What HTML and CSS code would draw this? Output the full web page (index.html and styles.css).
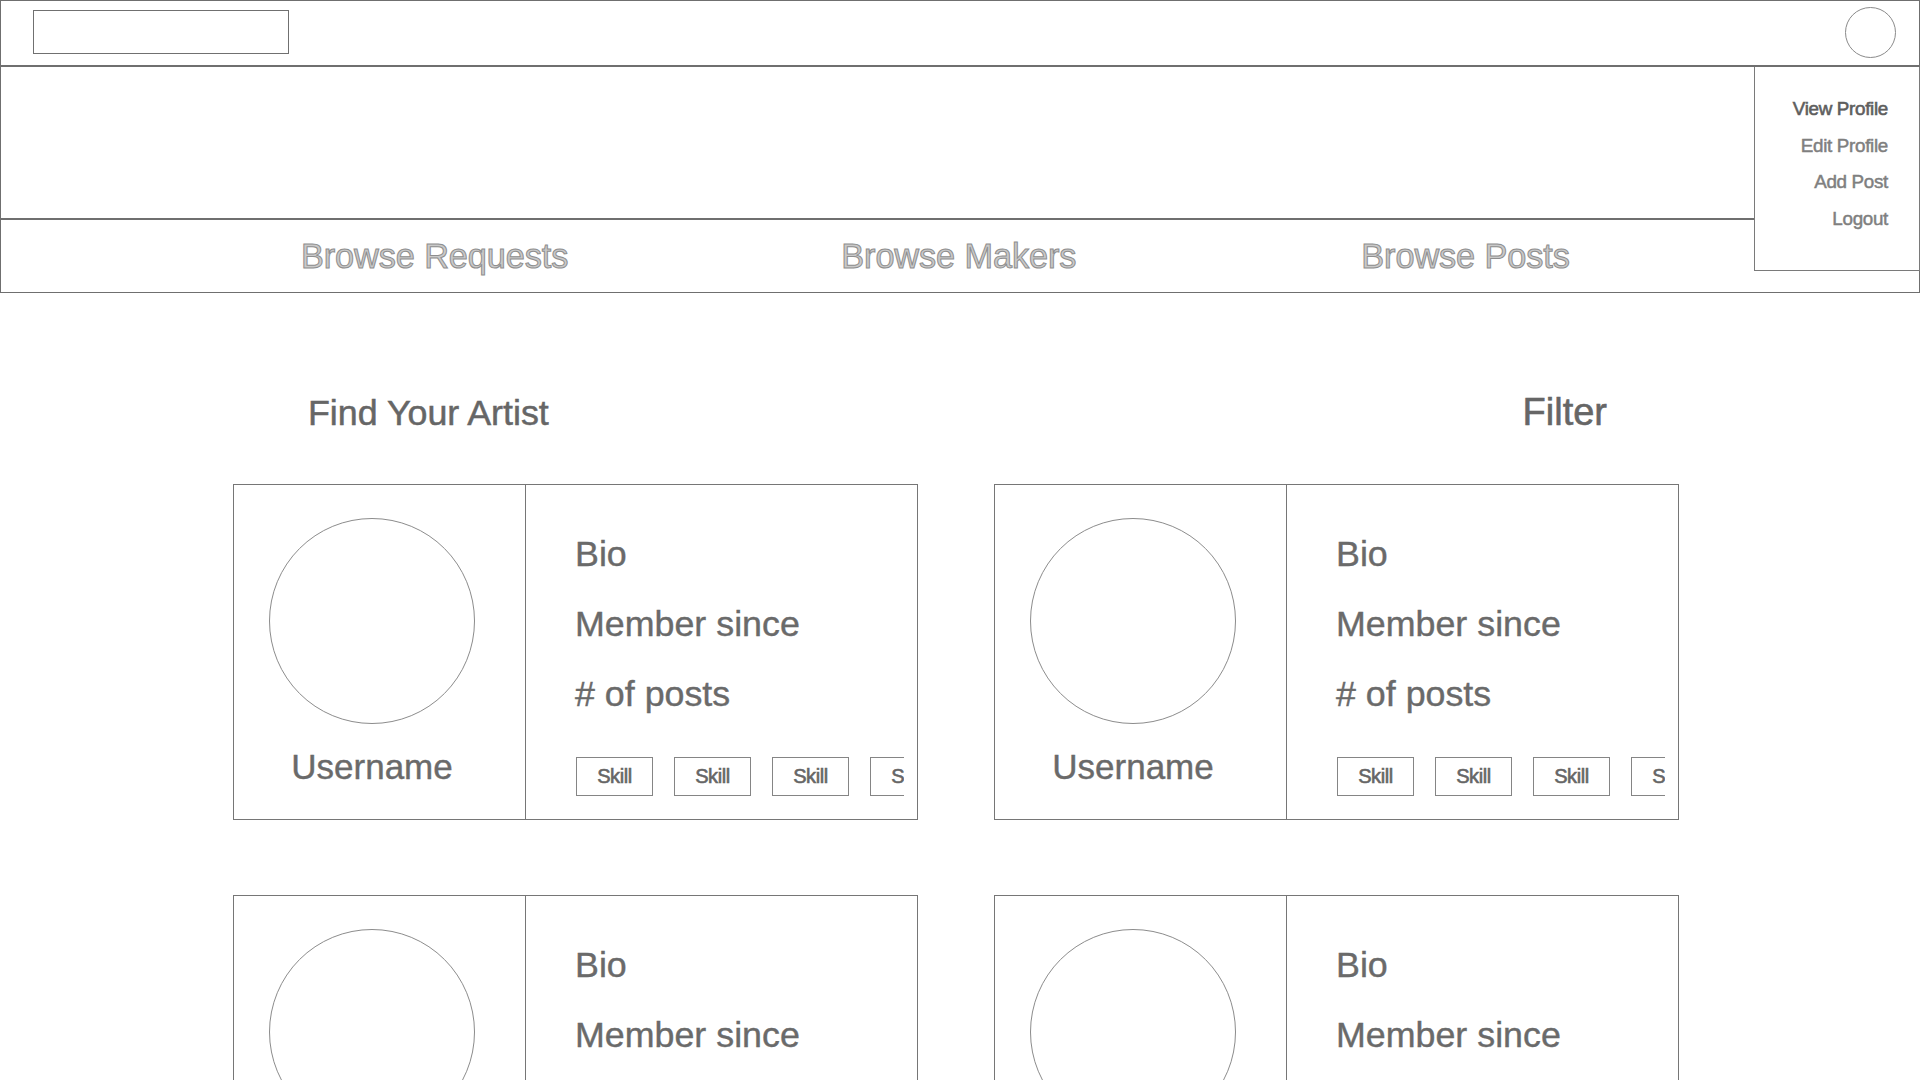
FILE: index.html
```html
<!DOCTYPE html>
<html lang="en">
<head>
<meta charset="utf-8">
<title>Find Your Artist</title>
<link rel="stylesheet" href="styles.css">
</head>
<body>
<header class="site-header">
  <div class="topbar">
    <div class="logo-box"></div>
    <div class="avatar"></div>
  </div>
  <div class="hero"></div>
  <nav class="main-nav">
    <a class="nav-link nav-requests" href="#">Browse Requests</a>
    <a class="nav-link nav-makers" href="#">Browse Makers</a>
    <a class="nav-link nav-posts" href="#">Browse Posts</a>
  </nav>
  <ul class="profile-menu">
    <li class="menu-item menu-item-strong">View Profile</li>
    <li class="menu-item">Edit Profile</li>
    <li class="menu-item">Add Post</li>
    <li class="menu-item">Logout</li>
  </ul>
</header>

<main class="content">
  <div class="heading-row">
    <h1 class="page-title">Find Your Artist</h1>
    <h2 class="filter-title">Filter</h2>
  </div>

  <div class="card-grid">
    <article class="artist-card">
      <div class="card-profile">
        <div class="profile-col">
          <div class="profile-pic"></div>
          <div class="username">Username</div>
        </div>
      </div>
      <div class="card-info">
        <div class="info-line">Bio</div>
        <div class="info-line">Member since</div>
        <div class="info-line"># of posts</div>
        <div class="skills">
          <span class="skill">Skill</span>
          <span class="skill">Skill</span>
          <span class="skill">Skill</span>
          <span class="skill">Skill</span>
        </div>
      </div>
    </article>

    <article class="artist-card">
      <div class="card-profile">
        <div class="profile-col">
          <div class="profile-pic"></div>
          <div class="username">Username</div>
        </div>
      </div>
      <div class="card-info">
        <div class="info-line">Bio</div>
        <div class="info-line">Member since</div>
        <div class="info-line"># of posts</div>
        <div class="skills">
          <span class="skill">Skill</span>
          <span class="skill">Skill</span>
          <span class="skill">Skill</span>
          <span class="skill">Skill</span>
        </div>
      </div>
    </article>

    <article class="artist-card">
      <div class="card-profile">
        <div class="profile-col">
          <div class="profile-pic"></div>
          <div class="username">Username</div>
        </div>
      </div>
      <div class="card-info">
        <div class="info-line">Bio</div>
        <div class="info-line">Member since</div>
        <div class="info-line"># of posts</div>
        <div class="skills">
          <span class="skill">Skill</span>
          <span class="skill">Skill</span>
          <span class="skill">Skill</span>
          <span class="skill">Skill</span>
        </div>
      </div>
    </article>

    <article class="artist-card">
      <div class="card-profile">
        <div class="profile-col">
          <div class="profile-pic"></div>
          <div class="username">Username</div>
        </div>
      </div>
      <div class="card-info">
        <div class="info-line">Bio</div>
        <div class="info-line">Member since</div>
        <div class="info-line"># of posts</div>
        <div class="skills">
          <span class="skill">Skill</span>
          <span class="skill">Skill</span>
          <span class="skill">Skill</span>
          <span class="skill">Skill</span>
        </div>
      </div>
    </article>
  </div>
</main>
</body>
</html>
```

FILE: styles.css
```css
* {
  box-sizing: border-box;
}

html, body {
  margin: 0;
  padding: 0;
  background: #ffffff;
}

body {
  font-family: "Liberation Sans", Arial, Helvetica, sans-serif;
  color: #6c6c6c;
  width: 1920px;
  height: 1080px;
  overflow: hidden;
}

/* ---------- Header ---------- */
.site-header {
  position: relative;
  border: 1px solid #6f6f6f;
}

.topbar {
  height: 66px;
  display: flex;
  align-items: center;
  justify-content: space-between;
  padding: 0 23px 2px 32px;
  border-bottom: 2px solid #6f6f6f;
}

.logo-box {
  width: 256px;
  height: 44px;
  border: 1px solid #707070;
}

.avatar {
  width: 51px;
  height: 51px;
  border-radius: 50%;
  border: 1px solid #8a8a8a;
}

.hero {
  height: 153px;
  border-bottom: 2px solid #6f6f6f;
}

.main-nav {
  height: 72px;
  display: flex;
  align-items: center;
  padding-left: 300px;
  gap: 273px;
}

.nav-link {
  font-size: 34.3px;
  text-decoration: none;
  color: #c9c9c9;
  -webkit-text-stroke: 1px #8e8e8e;
  letter-spacing: -0.1px;
}

.nav-posts {
  margin-left: 12px;
}

/* ---------- Profile dropdown ---------- */
.profile-menu {
  position: absolute;
  top: 66px;
  right: -1px;
  width: 166px;
  height: 204px;
  margin: 0;
  padding: 24px 31px 0 0;
  list-style: none;
  background: #ffffff;
  border: 1px solid #7a7a7a;
  border-top: none;
  text-align: right;
}

.menu-item {
  font-size: 18.8px;
  line-height: 36.5px;
  color: #7f7f7f;
  -webkit-text-stroke: 0.5px #7f7f7f;
  letter-spacing: -0.3px;
}

.menu-item-strong {
  color: #5e5e5e;
  -webkit-text-stroke: 0.6px #5e5e5e;
}

/* ---------- Main content ---------- */
.content {
  padding: 99px 0 0 233px;
}

.heading-row {
  width: 1446px;
  display: flex;
  align-items: baseline;
  justify-content: space-between;
  padding: 0 72px 0 75px;
}

.page-title {
  margin: 0;
  font-size: 35.8px;
  line-height: 40px;
  font-weight: normal;
  color: #666666;
  -webkit-text-stroke: 0.5px #666666;
}

.filter-title {
  margin: 0;
  font-size: 38px;
  line-height: 40px;
  font-weight: normal;
  color: #666666;
  -webkit-text-stroke: 0.6px #666666;
}

.card-grid {
  margin-top: 51px;
  width: 1446px;
  display: grid;
  grid-template-columns: 685px 685px;
  column-gap: 76px;
  row-gap: 75px;
}

.artist-card {
  height: 336px;
  display: grid;
  grid-template-columns: 292px 1fr;
  border: 1px solid #767676;
}

.card-profile {
  border-right: 1px solid #767676;
  padding: 33px 0 0 35px;
}

.profile-col {
  width: 206px;
  display: flex;
  flex-direction: column;
  align-items: center;
}

.profile-pic {
  width: 206px;
  height: 206px;
  border-radius: 50%;
  border: 1px solid #8c8c8c;
}

.username {
  margin-top: 23px;
  font-size: 35px;
  line-height: 40px;
  color: #6a6a6a;
  -webkit-text-stroke: 0.4px #6a6a6a;
  white-space: nowrap;
}

.card-info {
  padding: 34px 13px 0 49px;
  min-width: 0;
}

.info-line {
  font-size: 35.8px;
  line-height: 70px;
  color: #6a6a6a;
  -webkit-text-stroke: 0.4px #6a6a6a;
  white-space: nowrap;
}

.skills {
  margin-top: 28px;
  margin-left: 1px;
  display: flex;
  gap: 21px;
  overflow: hidden;
}

.skill {
  flex: 0 0 77px;
  height: 39px;
  border: 1px solid #858585;
  display: flex;
  align-items: center;
  justify-content: center;
  font-size: 20px;
  color: #666666;
  -webkit-text-stroke: 0.6px #666666;
  letter-spacing: -0.4px;
}
```
